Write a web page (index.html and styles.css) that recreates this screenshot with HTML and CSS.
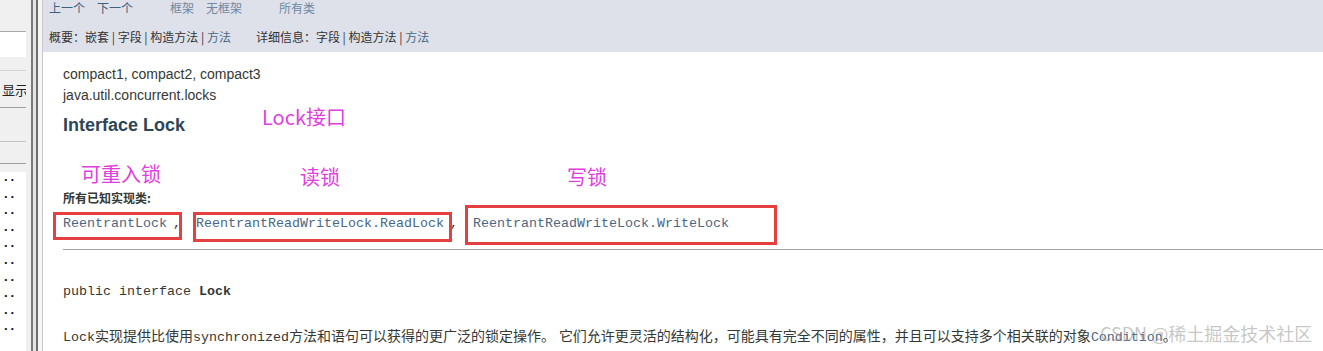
FILE: index.html
```html
<!DOCTYPE html>
<html lang="zh-CN">
<head>
<meta charset="utf-8">
<title>Interface Lock</title>
<link rel="stylesheet" href="styles.css">
</head>
<body>
<div class="page">
  <aside class="sidebar">
    <div class="sb-input"></div>
    <div class="sb-line sb-line-a"></div>
    <div class="sb-label"><span>显示</span></div>
    <div class="sb-line sb-line-b"></div>
    <div class="sb-line sb-line-c"></div>
    <div class="sb-line sb-line-d"></div>
    <div class="sb-list">
      <div class="sb-row">..</div><div class="sb-row">..</div><div class="sb-row">..</div>
      <div class="sb-row">..</div><div class="sb-row">..</div><div class="sb-row">..</div>
      <div class="sb-row">..</div><div class="sb-row">..</div><div class="sb-row">..</div>
      <div class="sb-row">..</div>
    </div>
  </aside>
  <div class="divider"></div>
  <main class="main">
    <header class="subnav">
      <div class="nav-row">
        <span class="nav-dark">上一个</span>
        <span class="nav-dark gap-s">下一个</span>
        <span class="nav-light gap-l">框架</span>
        <span class="nav-light gap-s">无框架</span>
        <span class="nav-light gap-l">所有类</span>
      </div>
      <div class="nav-row nav-row2">
        <span class="nav-text">概要：</span><span class="nav-text">嵌套 | 字段 | 构造方法 | </span><span class="nav-link">方法</span>
        <span class="nav-text group2">详细信息：</span><span class="nav-text">字段 | 构造方法 | </span><span class="nav-link">方法</span>
      </div>
    </header>
    <section class="content">
      <div class="profile">compact1, compact2, compact3</div>
      <div class="profile">java.util.concurrent.locks</div>
      <h2 class="title">Interface Lock</h2>
      <div class="impl-label">所有已知实现类:</div>
      <div class="impl-row">
        <span class="code link">ReentrantLock</span><span class="sep">,</span><span class="code link">ReentrantReadWriteLock.ReadLock</span><span class="sep">,</span><span class="code link">ReentrantReadWriteLock.WriteLock</span>
      </div>
      <hr class="rule">
      <div class="signature"><span class="code">public interface </span><span class="code bold">Lock</span></div>
      <div class="desc"><span class="code">Lock</span><span class="cjk">实现提供比使用</span><span class="code">synchronized</span><span class="cjk">方法和语句可以获得的更广泛的锁定操作。</span> <span class="cjk">它们允许更灵活的结构化，可能具有完全不同的属性，并且可以支持多个相关联的对象</span><span class="code link">Condition</span><span class="cjk">。</span></div>

      <div class="box box1"></div>
      <div class="box box2"></div>
      <div class="box box3"></div>

      <div class="note note-lock">Lock接口</div>
      <div class="note note-reentrant">可重入锁</div>
      <div class="note note-read">读锁</div>
      <div class="note note-write">写锁</div>

      <div class="watermark">CSDN @稀土掘金技术社区</div>
    </section>
  </main>
</div>
</body>
</html>
```

FILE: styles.css
```css
html, body {
  margin: 0;
  padding: 0;
  width: 1323px;
  height: 351px;
  overflow: hidden;
  background: #ffffff;
}

.page {
  display: flex;
  height: 351px;
  font-family: "Liberation Sans", "Noto Sans CJK SC", sans-serif;
}

/* ---------- left sidebar ---------- */
.sidebar {
  width: 26px;
  flex: none;
  background: #f0f0f0;
  display: flex;
  flex-direction: column;
  overflow: hidden;
}
.sb-input {
  margin-top: 31px;
  height: 25px;
  background: #ffffff;
  border-top: 1px solid #a8a8a8;
}
.sb-line {
  height: 1px;
  flex: none;
}
.sb-line-a { margin-top: 13px; background: #d4d4d4; }
.sb-label {
  height: 36px;
  display: flex;
  justify-content: flex-end;
  align-items: center;
  font-family: "Noto Sans CJK SC", sans-serif;
  font-size: 13px;
  color: #222222;
  white-space: nowrap;
  overflow: hidden;
}
.sb-label span { margin-right: -2px; }
.sb-line-b { background: #a0a0a0; }
.sb-line-c { margin-top: 33px; background: #c4c4c4; }
.sb-line-d { margin-top: 21px; background: #a0a0a0; }
.sb-list {
  margin-top: 8px;
  background: #ffffff;
  flex: 1;
}
.sb-row {
  height: 16.6px;
  line-height: 10px;
  font-size: 13px;
  font-weight: bold;
  letter-spacing: 3px;
  padding-left: 4px;
  color: #111111;
}

/* ---------- divider ---------- */
.divider {
  width: 17px;
  flex: none;
  background: linear-gradient(to right,
    #f0f0f0 0, #f0f0f0 5px,
    #7a7a7a 5px, #7a7a7a 7px,
    #e6e6e6 7px, #e6e6e6 10px,
    #6e6e6e 10px, #6e6e6e 12px,
    #f6f6f6 12px, #f6f6f6 16px,
    #c8c8c8 16px, #c8c8c8 17px);
}

/* ---------- main ---------- */
.main {
  flex: 1;
  display: flex;
  flex-direction: column;
  min-width: 0;
}
.subnav {
  height: 52px;
  flex: none;
  background: #dee1e9;
  padding: 0 6px;
  font-family: "Noto Sans CJK SC", sans-serif;
  font-size: 12px;
}
.nav-row {
  display: flex;
  line-height: 15px;
  white-space: nowrap;
}
.nav-row2 { margin-top: 14px; }
.nav-dark { color: #3f5f7f; }
.nav-light { color: #6d88a3; }
.gap-s { margin-left: 12px; }
.gap-l { margin-left: 37px; }
.nav-text { color: #333333; white-space: pre; }
.nav-link { color: #4a6782; }
.group2 { margin-left: 25px; }

.content {
  position: relative;
  flex: 1;
  padding: 12px 0 0 20px;
  color: #353833;
  font-size: 14px;
  white-space: nowrap;
}
.profile {
  line-height: 21px;
}
.title {
  margin: 8px 0 0;
  font-size: 18px;
  line-height: 22px;
  font-weight: bold;
  color: #2c4557;
}
.impl-label {
  margin-top: 54px;
  line-height: 16px;
  font-size: 12px;
  font-weight: bold;
  font-family: "Noto Sans CJK SC", sans-serif;
  color: #353833;
}
.impl-row {
  margin-top: 9px;
  line-height: 18px;
  display: flex;
}
.code {
  font-family: "Liberation Mono", monospace;
  font-size: 13.33px;
}
.link { color: #4a6782; }
.bold { font-weight: bold; }
.sep {
  font-family: "Liberation Mono", monospace;
  font-size: 13.33px;
  margin: 0 15px 0 6px;
}
.rule {
  margin: 16px 0 0;
  border: 0;
  border-top: 1px solid #a3a3a3;
  height: 0;
}
.signature {
  margin-top: 31px;
  line-height: 18px;
}
.desc {
  margin-top: 25px;
  line-height: 18px;
}
.cjk {
  font-family: "Noto Sans CJK SC", sans-serif;
  font-size: 14px;
}

/* ---------- overlays ---------- */
.box {
  position: absolute;
  box-sizing: border-box;
  border: 3px solid #e5403f;
}
.box1 { left: 10px; top: 160px; width: 129px; height: 28px; }
.box2 { left: 150px; top: 160px; width: 259px; height: 30px; }
.box3 { left: 422px; top: 153px; width: 312px; height: 40px; }

.note {
  position: absolute;
  font-family: "Noto Sans CJK SC", sans-serif;
  font-size: 20px;
  line-height: 24px;
  color: #e03ee0;
}
.note-lock { left: 219px; top: 53px; }
.note-reentrant { left: 38px; top: 110px; }
.note-read { left: 257px; top: 113px; }
.note-write { left: 524px; top: 113px; }

.watermark {
  position: absolute;
  left: 1057px;
  top: 269px;
  font-family: "Noto Sans CJK SC", sans-serif;
  font-size: 18px;
  line-height: 24px;
  color: rgba(150, 150, 150, 0.55);
}
```
